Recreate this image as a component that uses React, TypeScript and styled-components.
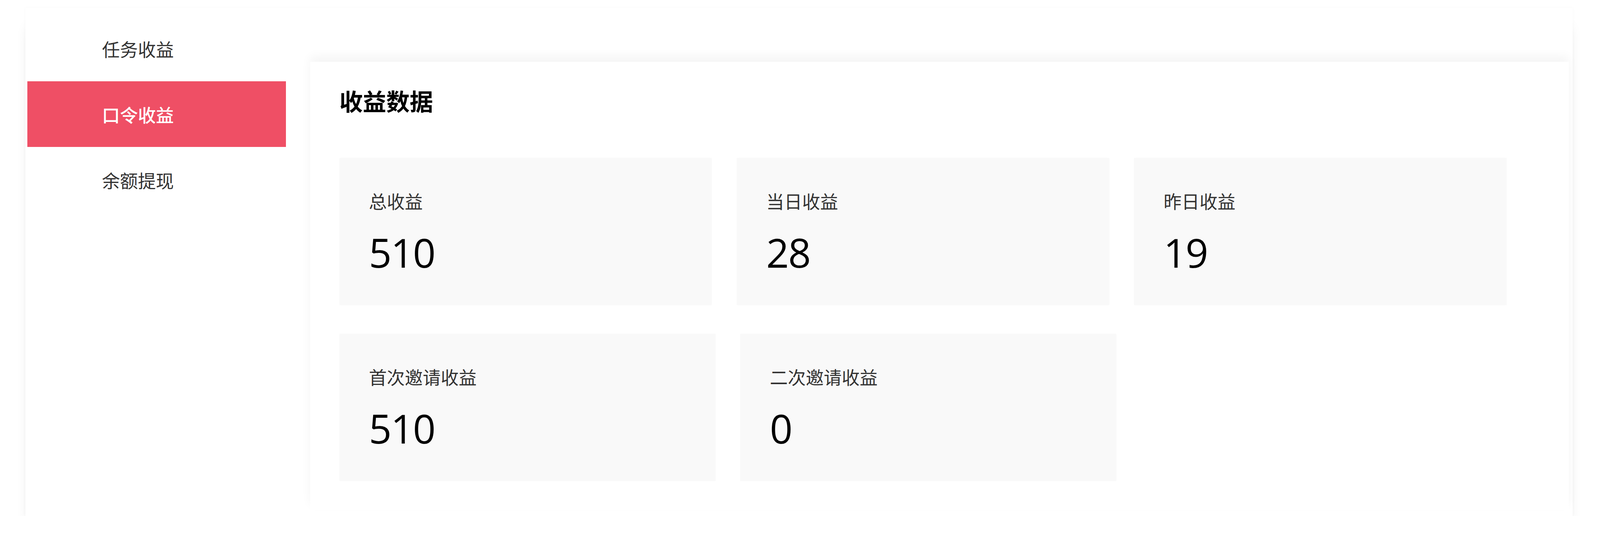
import React from 'react';
import styled, { createGlobalStyle } from 'styled-components';

// Design measured on a 4832px wide frame; horizontal sizes follow the viewport width.
const DESIGN_WIDTH = 4832;
const hx = (px: number) => `${((px / DESIGN_WIDTH) * 100).toFixed(4)}vw`;

const GlobalStyle = createGlobalStyle`
  * { box-sizing: border-box; }
  html, body {
    margin: 0;
    padding: 0;
    background: #ffffff;
    font-family: 'Noto Sans CJK SC', 'Noto Sans', sans-serif;
  }
`;

const Shell = styled.div`
  display: flex;
  align-items: flex-start;
  width: ${hx(4673)};
  height: 1300px;
  margin: 20px 0 0 ${hx(77)};
  background: #ffffff;
  box-shadow: 0 36px 36px -14px rgba(0, 0, 0, 0.12), 0 0 8px rgba(0, 0, 0, 0.03);
`;

const Sidebar = styled.nav`
  display: flex;
  flex-direction: column;
  width: ${hx(786)};
  padding: 20px 0 0 ${hx(5)};
  flex-shrink: 0;
`;

const NavItem = styled.div<{ $active?: boolean }>`
  display: flex;
  align-items: center;
  height: 168px;
  padding-left: ${hx(226)};
  font-size: 46px;
  white-space: nowrap;
  color: ${(p) => (p.$active ? '#ffffff' : '#333333')};
  background: ${(p) => (p.$active ? '#ef4f65' : 'transparent')};
  font-weight: ${(p) => (p.$active ? 500 : 400)};
`;

const Main = styled.section`
  width: ${hx(3801)};
  height: 1147px;
  margin: 138px 0 0 ${hx(74)};
  padding: 63px 0 0 ${hx(88)};
  background: #ffffff;
  box-shadow: 0 -14px 24px rgba(0, 0, 0, 0.045);
  flex-shrink: 0;
`;

const Title = styled.h2`
  margin: 0;
  font-size: 60px;
  line-height: 72px;
  font-weight: 700;
  color: #000000;
`;

const StatRows = styled.div`
  display: flex;
  flex-direction: column;
  gap: 73px;
  margin-top: 111px;
`;

const StatRow = styled.div`
  display: flex;
  gap: ${hx(75)};
`;

const StatCard = styled.div<{ $width: number }>`
  width: ${(p) => hx(p.$width)};
  height: 377px;
  padding: 79px 0 0 ${hx(89)};
  background: #f9f9f9;
  box-shadow: 0 0 10px rgba(0, 0, 0, 0.012);
`;

const StatLabel = styled.div`
  font-size: 46px;
  line-height: 60px;
  color: #333333;
  font-weight: 400;
  white-space: nowrap;
`;

const StatValue = styled.div`
  margin-top: 52px;
  font-family: 'Open Sans', 'Noto Sans', sans-serif;
  font-size: 102px;
  line-height: 102px;
  color: #000000;
  letter-spacing: -2px;
`;

const navItems = ['任务收益', '口令收益', '余额提现'];

const rows = [
  {
    width: 1125,
    stats: [
      { label: '总收益', value: '510' },
      { label: '当日收益', value: '28' },
      { label: '昨日收益', value: '19' },
    ],
  },
  {
    width: 1136,
    stats: [
      { label: '首次邀请收益', value: '510' },
      { label: '二次邀请收益', value: '0' },
    ],
  },
];

const App: React.FC = () => {
  return (
    <>
      <GlobalStyle />
      <Shell>
        <Sidebar>
          {navItems.map((item) => (
            <NavItem key={item} $active={item === '口令收益'}>
              {item}
            </NavItem>
          ))}
        </Sidebar>
        <Main>
          <Title>收益数据</Title>
          <StatRows>
            {rows.map((row, i) => (
              <StatRow key={i}>
                {row.stats.map((s) => (
                  <StatCard key={s.label} $width={row.width}>
                    <StatLabel>{s.label}</StatLabel>
                    <StatValue>{s.value}</StatValue>
                  </StatCard>
                ))}
              </StatRow>
            ))}
          </StatRows>
        </Main>
      </Shell>
    </>
  );
};

export default App;
